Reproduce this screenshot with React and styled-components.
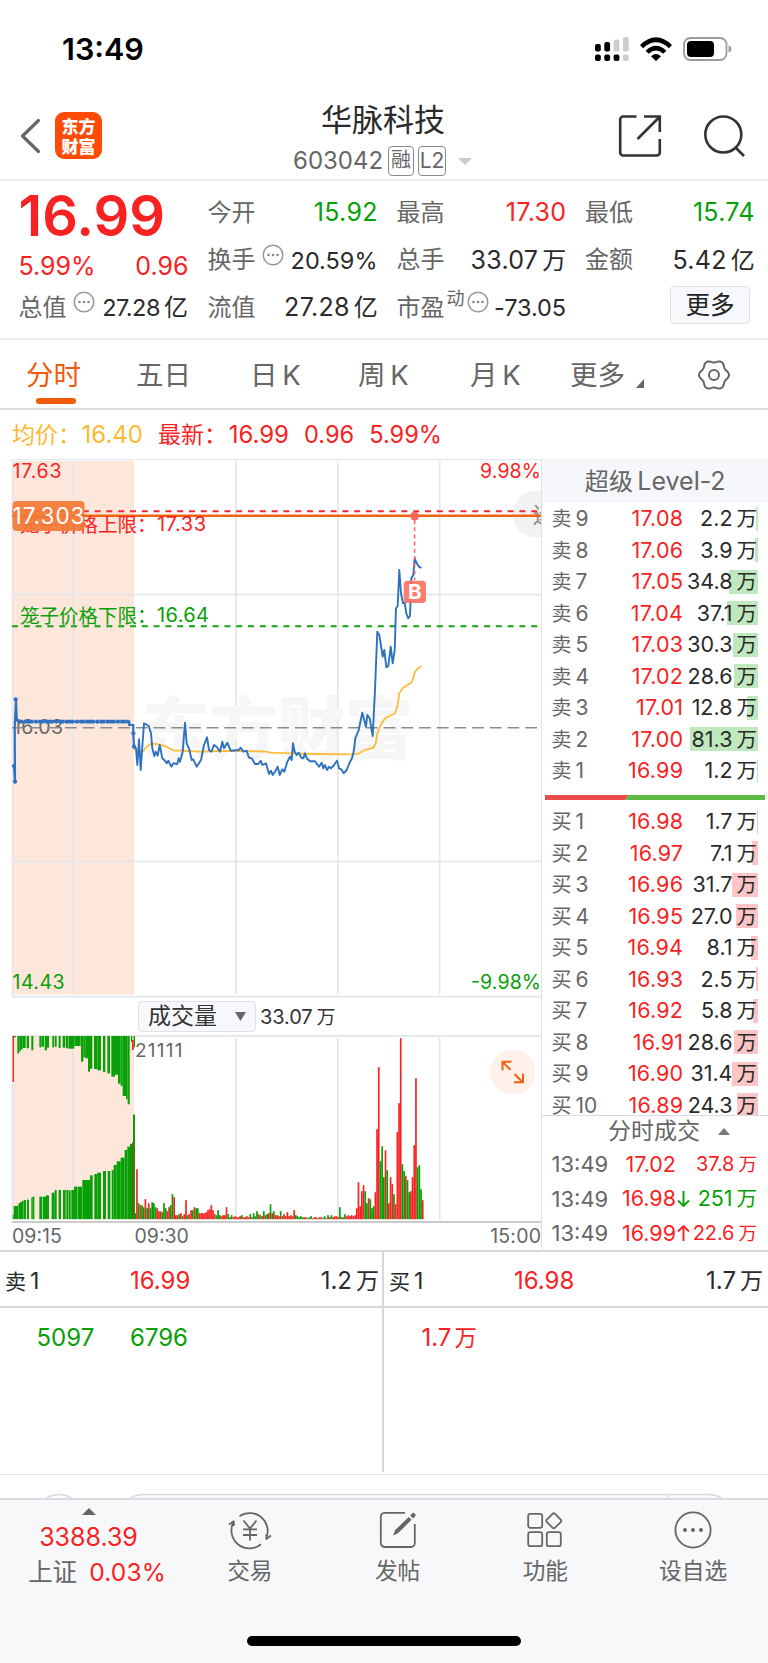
import React from "react";
import styled, { createGlobalStyle } from "styled-components";

const RED = "#f82222";
const GREEN = "#07a007";
const INK = "#2a2a2a";
const GRAY = "#666";
const FONT = 'Inter, "Noto Sans CJK SC", sans-serif';

const Global = createGlobalStyle`
  * { box-sizing: border-box; }
  body { margin: 0; background: #fff; font-family: ${FONT}; color: ${INK}; }
  svg { display: block; }
  svg text { font-family: ${FONT}; }
`;

const Screen = styled.div`
  width: 768px;
  height: 1663px;
  overflow: hidden;
  display: flex;
  flex-direction: column;
  background: #fff;
`;

const Text = styled.span`
  font-size: ${(p) => p.$size || 24}px;
  font-weight: ${(p) => p.$weight || 400};
  color: ${(p) => p.$color || INK};
  letter-spacing: ${(p) => p.$ls || 0}px;
  margin-right: ${(p) => -(p.$ls || 0)}px;
  line-height: 1;
  white-space: nowrap;
`;

const Unit = styled.span`
  margin-left: ${(p) => p.$gap ?? 4}px;
  font-size: ${(p) => p.$size || 24}px;
  letter-spacing: 0;
`;

/* ---------- status bar ---------- */
const StatusBar = styled.div`
  height: 98px;
  display: flex;
  justify-content: space-between;
  align-items: center;
  padding: 0 36px 0 62px;
`;
const StatusIcons = styled.div`
  display: flex;
  align-items: center;
  gap: 11px;
`;

/* ---------- title bar ---------- */
const TitleBar = styled.header`
  height: 83px;
  display: grid;
  grid-template-columns: 289px 190px 289px;
  border-bottom: 2px solid #ededed;
`;
const TitleLeft = styled.div`
  display: flex;
  align-items: center;
  gap: 13px;
  padding: 0 0 6px 20px;
`;
const AppLogo = styled.div`
  width: 47px;
  height: 47px;
  border-radius: 9px;
  background: #ff4b05;
  color: #fff;
  font: 900 17px/20px "Noto Sans CJK SC", sans-serif;
  display: flex;
  flex-direction: column;
  align-items: center;
  justify-content: center;
`;
const TitleCenter = styled.div`
  display: flex;
  flex-direction: column;
  align-items: center;
  padding: 6px 2px 0 0;
`;
const CodeLine = styled.div`
  display: flex;
  align-items: center;
  width: 180px;
  gap: 4px;
  margin-top: 11px;
`;
const Tag = styled.span`
  width: ${(p) => p.$w}px;
  height: 30px;
  flex: none;
  border: 1.5px solid #8a8a8a;
  border-radius: 4px;
  font-size: ${(p) => p.$size}px;
  line-height: 27px;
  text-align: center;
  color: ${GRAY};
`;
const Code = styled(Text)`
  width: 91px;
`;
const Caret = styled.span`
  border: 7px solid transparent;
  border-top-color: #ccc;
  border-bottom: 0;
  margin-left: 8px;
`;
const TitleRight = styled.div`
  display: flex;
  justify-content: flex-end;
  align-items: flex-start;
  gap: 41px;
  padding: 16px 22px 0 0;
`;

/* ---------- quote ---------- */
const Quote = styled.section`
  height: 159px;
  display: grid;
  grid-template-columns: 170px 170px 169.5px 169.5px;
  column-gap: 19px;
  padding: 8px 0 0 18.5px;
  border-bottom: 2px solid #ededed;
`;
const QuoteColumn = styled.div`
  display: flex;
  flex-direction: column;
`;
const QuoteRow = styled.div`
  height: 47.5px;
  display: flex;
  align-items: center;
  justify-content: space-between;
`;
const PriceRow = styled.div`
  height: 53px;
  display: flex;
  align-items: center;
`;
const ChangeRow = styled.div`
  height: 42px;
  display: flex;
  align-items: center;
  justify-content: space-between;
  padding-top: 7px;
`;
const LabelGroup = styled.span`
  display: flex;
  align-items: center;
  gap: 6px;
  svg { margin-bottom: 11px; }
`;
const Sup = styled.span`
  font-size: 18px;
  line-height: 1;
  color: ${GRAY};
  margin: 0 -4px 17px -4px;
`;
const MoreButton = styled.button`
  width: 80px;
  height: 38px;
  margin: -5px 4.5px 0 auto;
  padding: 0;
  border: 1.5px solid #dfe1e8;
  border-radius: 4px;
  background: #f7f8fb;
  font: 400 24.5px/33px ${FONT};
  color: #222;
`;

/* ---------- period tabs ---------- */
const Tabs = styled.nav`
  height: 70px;
  display: flex;
  align-items: center;
  padding: 2px 0 0 26px;
  border-bottom: 2px solid #dcdcdf;
`;
const Tab = styled.div`
  position: relative;
  width: ${(p) => p.$w}px;
  font-size: 27.5px;
  line-height: 66px;
  color: ${(p) => (p.$on ? "#f05a0a" : GRAY)};
  word-spacing: -3px;
  &::after {
    content: "";
    display: ${(p) => (p.$on ? "block" : "none")};
    position: absolute;
    left: 9.5px;
    bottom: 4px;
    width: 40px;
    height: 6px;
    border-radius: 3px;
    background: #f05a0a;
  }
`;
const MoreTab = styled(Tab)`
  display: flex;
  align-items: center;
  gap: 11px;
  svg { margin-top: 17px; }
`;
const Summary = styled.div`
  height: 49px;
  display: flex;
  align-items: center;
  gap: 15px;
  padding: 1px 0 0 12px;
`;
const Pair = styled.span`
  display: flex;
  align-items: center;
  width: ${(p) => p.$w}px;
  justify-content: space-between;
`;

/* ---------- chart + order book ---------- */
const Market = styled.main`
  height: 793px;
  display: grid;
  grid-template-columns: 541px 227px;
  border-bottom: 2px solid #d5d9df;
`;
const ChartArea = styled.div`
  display: flex;
  flex-direction: column;
`;
const VolumeHeader = styled.div`
  height: 37px;
  display: flex;
  align-items: center;
  gap: 4px;
  padding-left: 138px;
`;
const VolumeSelect = styled.div`
  width: 118px;
  height: 31px;
  display: flex;
  align-items: center;
  justify-content: space-between;
  padding: 0 9px 0 9px;
  border: 1.5px solid #dfe1e8;
  border-radius: 4px;
  background: #f7f8fb;
`;
const Axis = styled.div`
  height: 27px;
  display: grid;
  grid-template-columns: 122.5px 1fr auto;
  align-items: center;
  padding: 1px 0 0 12px;
`;

const Book = styled.aside`
  display: flex;
  flex-direction: column;
  border-left: 1.5px solid #dfe1e7;
`;
const BookTitle = styled.div`
  height: 44px;
  flex: none;
  display: flex;
  align-items: center;
  justify-content: center;
  padding-top: 1px;
  background: #f6f7fa;
`;
const BookSide = styled.div`
  height: ${(p) => p.$h}px;
  overflow: hidden;
  flex: none;
`;
const BookRow = styled.div`
  height: 31.5px;
  display: grid;
  grid-template-columns: 60px 71.5px 1fr;
  align-items: center;
  padding: 0 10px 0 9.5px;
`;
const Cell = styled.div`
  display: flex;
  height: 24px;
  align-items: center;
  justify-content: ${(p) => (p.$left ? "flex-start" : "flex-end")};
`;
const QtyCell = styled(Cell)`
  padding-right: 1px;
  background: linear-gradient(${(p) => p.$bar}, ${(p) => p.$bar}) right / ${(p) => p.$w}px 100% no-repeat;
`;
const RatioBar = styled.div`
  padding-left: 2.5px;
  margin: 8px 0 6px;
`;
const TradesTitle = styled.div`
  height: 32px;
  flex: none;
  display: flex;
  align-items: center;
  gap: 18px;
  padding-left: 66px;
  border-top: 1.5px solid #d9dbe0;
`;
const TradeRow = styled.div`
  height: 34.6px;
  display: grid;
  grid-template-columns: 57px 67.5px 15px 1fr;
  align-items: center;
  padding: 0 11px 0 9.5px;
`;

/* ---------- level queues ---------- */
const Queues = styled.section`
  height: 222px;
  display: grid;
  grid-template-columns: 384px 384px;
`;
const Queue = styled.div`
  height: 220px;
  border-right: ${(p) => (p.$divider ? "2px solid #d5d9df" : "0")};
`;
const QueueHead = styled.div`
  height: 56px;
  display: grid;
  grid-template-columns: 125px 1fr auto;
  align-items: center;
  padding: 4px ${(p) => p.$right}px 0 5px;
  border-bottom: 2px solid #d5d9df;
`;
const QueueItems = styled.div`
  height: 60px;
  display: grid;
  grid-template-columns: ${(p) => p.$first}px 92px;
  align-items: center;
  padding-left: ${(p) => 130 - p.$first}px;
`;
const Peek = styled.div`
  height: 24px;
  overflow: hidden;
  border-top: 1.5px solid #e3e5ea;
`;

/* ---------- bottom bar ---------- */
const BottomBar = styled.footer`
  flex: 1;
  display: flex;
  flex-direction: column;
  align-items: center;
  justify-content: space-between;
  padding-bottom: 17px;
  border-top: 2px solid #d9dbe0;
  background: #f7f8fa;
`;
const BottomItems = styled.div`
  width: 768px;
  display: grid;
  grid-template-columns: 176px repeat(4, 147.75px);
`;
const IndexBlock = styled.div`
  display: flex;
  flex-direction: column;
  align-items: center;
  padding: 8px 0 0 1px;
`;
const IndexLine = styled.div`
  display: flex;
  align-items: center;
  gap: 12px;
  margin-top: ${(p) => p.$top}px;
  padding-left: ${(p) => p.$indent || 0}px;
`;
const NavItem = styled.div`
  display: flex;
  flex-direction: column;
  align-items: center;
  gap: 10px;
  padding-top: 10px;
`;
const HomeIndicator = styled.div`
  width: 274px;
  height: 10px;
  border-radius: 5px;
  background: #000;
`;

const InfoDots = () => (
  <svg width="22" height="22" viewBox="0 0 22 22">
    <circle cx="11" cy="11" r="9.8" fill="none" stroke="#999" strokeWidth="1.5" />
    {[6.5, 11, 15.5].map((x) => (
      <circle key={x} cx={x} cy="11" r="1.3" fill="#888" />
    ))}
  </svg>
);

/* Source coordinates are three units per pixel; these helpers bring them to chart pixels. */
const toPoints = (list, dx) =>
  list.map(([x, y]) => `${(x / 3 + dx).toFixed(1)},${(y / 3 - 9).toFixed(1)}`).join(" ");

const PRE_LINE = [[42, 948], [45, 995], [44, 835], [48, 748], [50, 805], [56, 815], [388, 815], [388, 825], [400, 825], [400, 850], [402, 890]];
const PRICE_A = [[402, 890], [408, 895], [412, 945], [417, 868], [422, 960], [427, 890], [432, 820], [446, 828], [453, 850], [457, 895], [463, 918], [467, 905], [473, 917], [479, 885], [487, 925], [495, 932], [500, 940], [505, 932], [514, 950], [520, 940], [532, 942], [536, 925], [540, 935], [548, 905], [555, 818], [560, 880], [567, 895], [575, 930], [580, 928], [590, 950], [603, 930], [612, 885], [621, 862], [627, 900], [634, 905], [642, 885], [650, 890], [660, 905], [667, 875], [672, 895], [682, 878], [692, 902], [716, 900], [722, 893], [730, 905], [740, 902], [746, 922], [755, 925], [765, 942], [775, 942], [782, 932], [787, 945], [798, 940], [807, 972]];
const PRICE_B = [[3, 962], [8, 975], [15, 965], [23, 950], [29, 975], [37, 958], [43, 965], [52, 935], [60, 920], [65, 930], [69, 880], [74, 905], [80, 915], [86, 908], [95, 925], [100, 925], [105, 910], [110, 925], [120, 934], [135, 934], [147, 950], [155, 938], [160, 955], [165, 945], [171, 960], [177, 950], [183, 955], [190, 948], [201, 932], [207, 955], [214, 958], [221, 970], [230, 960], [238, 940], [246, 925], [252, 900], [256, 865], [266, 840], [277, 788], [288, 830], [292, 795], [299, 805], [308, 858], [315, 720], [322, 545], [328, 555], [338, 620], [343, 600], [349, 652], [355, 648], [362, 590], [368, 640], [374, 600], [378, 475], [383, 468], [388, 360], [393, 430], [399, 460], [404, 458], [409, 490], [415, 505], [420, 498], [424, 385], [430, 375], [434, 325], [440, 340], [447, 350], [454, 354]];
const AVG_A = [[402, 895], [412, 905], [428, 905], [440, 890], [455, 880], [480, 884], [500, 890], [520, 901], [560, 903], [600, 905], [650, 903], [740, 903], [800, 905]];
const AVG_B = [[0, 908], [60, 910], [140, 912], [250, 913], [268, 910], [280, 902], [310, 893], [317, 880], [322, 850], [332, 825], [345, 805], [375, 790], [383, 765], [388, 730], [398, 715], [410, 706], [422, 700], [428, 690], [434, 667], [442, 657], [454, 649]];

const GRID_X = [73, 236, 337.8, 439.7];

const PriceChart = () => (
  <svg width="541" height="539" viewBox="0 0 541 539">
    <rect x="12.5" y="2" width="121.5" height="533.7" fill="#fde6da" />
    <g stroke="#e4e7ec" strokeWidth="1.7">
      <path d="M12.5 537V0M12 .5H541M12 135.7H541M12 402.3H541M12 537.7H541" fill="none" />
      {GRID_X.map((x) => (
        <line key={x} x1={x} x2={x} y1="2" y2="535.5" />
      ))}
    </g>
    <text x="142" y="295" fontSize="68" fontWeight="900" fill="#f6f6f6" textLength="271">东方财富</text>
    <text x="13" y="275" fontSize="19.5" fill={GRAY} textLength="50">16.03</text>
    <line x1="65" x2="538" y1="268.8" y2="268.8" stroke="#8b8b8b" strokeWidth="1.6" strokeDasharray="11.8 5.9" />
    <line x1="12" x2="65" y1="268.8" y2="268.8" stroke="#8b8b8b" strokeWidth="1.6" strokeDasharray="11.8 5.9" />
    <line x1="12" x2="538" y1="167.3" y2="167.3" stroke="#12a512" strokeWidth="2" strokeDasharray="6 5.8" />
    <text x="20" y="163.5" fontSize="19.5" fill={GREEN}>笼子价格下限：</text>
    <text x="157" y="163" fontSize="20" fill={GREEN} textLength="52">16.64</text>
    <circle cx="536" cy="55" r="23.3" fill="#f2f2f2" />
    <text x="533" y="63.5" fontSize="22" fill="#888">迷</text>
    <line x1="12" x2="538" y1="52.3" y2="52.3" stroke="#f02a35" strokeWidth="2" strokeDasharray="6 5.8" />
    <line x1="12" x2="541" y1="56.7" y2="56.7" stroke="#f0640f" strokeWidth="2.4" />
    <text x="20" y="73" fontSize="19.5" fill={RED}>笼子价格上限：</text>
    <text x="157" y="72" fontSize="20" fill={RED} textLength="49">17.33</text>
    <polyline points={toPoints(AVG_A, 0) + " " + toPoints(AVG_B, 270)} fill="none" stroke="#fdbc3c" strokeWidth="1.8" strokeLinejoin="round" />
    <polyline points={toPoints(PRE_LINE, 0)} fill="none" stroke="#2d71c0" strokeWidth="2.2" />
    <line x1="18" x2="129" y1="262.6" y2="262.6" stroke="#2d71c0" strokeWidth="3.8" strokeDasharray="5 1 9 1.5 3 1" />
    {[[47, 748], [45, 995], [42, 948], [400, 850], [402, 890]].map(([x, y]) => (
      <circle key={y} cx={x / 3} cy={y / 3 - 9} r="2.1" fill="#2d71c0" />
    ))}
    <polyline points={toPoints(PRICE_A, 0) + " " + toPoints(PRICE_B, 270)} fill="none" stroke="#2d71c0" strokeWidth="1.9" strokeLinejoin="round" />
    <line x1="414.6" x2="414.6" y1="61" y2="121" stroke="#f9625a" strokeWidth="1.5" strokeDasharray="4 3.2" />
    <circle cx="414.6" cy="57.2" r="4.4" fill="#fb6a57" />
    <rect x="403.7" y="121.7" width="22.3" height="22.3" rx="3.5" fill="#ff6e61" fillOpacity=".9" />
    <text x="414.8" y="140.2" fontSize="20.5" fontWeight="700" fill="#fff" textAnchor="middle">B</text>
    <rect x="12.5" y="42" width="72" height="30" rx="4" fill="#f27a36" fillOpacity=".92" />
    <text x="12.5" y="65.2" fontSize="22.5" fill="#fff" textLength="72">17.303</text>
    <text x="12.5" y="19.3" fontSize="19.5" fill={RED} textLength="49">17.63</text>
    <text x="541" y="19.3" fontSize="19.5" fill={RED} textAnchor="end" textLength="61">9.98%</text>
    <text x="12.5" y="530.3" fontSize="19.5" fill={GREEN} textLength="52">14.43</text>
    <text x="541" y="530.3" fontSize="19.5" fill={GREEN} textAnchor="end" textLength="70">-9.98%</text>
  </svg>
);

/* Auction bars hanging from the top: [start, end, lower edge]. */
const AUCTION_TOP = [[38, 48, 232], [52, 58, 280], [58, 63, 273], [63, 68, 268], [68, 77, 264], [80, 87, 265], [94, 100, 271], [118, 125, 262], [126, 132, 260], [134, 141, 271], [141, 147, 263], [157, 162, 262], [164, 170, 260], [176, 182, 264], [188, 196, 263], [198, 205, 265], [206, 223, 266], [223, 242, 258], [243, 250, 305], [250, 256, 292], [256, 264, 295], [264, 270, 335], [270, 277, 326], [282, 292, 327], [292, 303, 331], [309, 316, 336], [322, 330, 340], [334, 345, 350], [345, 354, 344], [354, 362, 371], [362, 368, 378], [368, 378, 408], [378, 383, 418], [383, 389, 433], [393, 397, 245], [401, 405, 262]];
/* Auction bars standing on the base line: [start, end, upper edge]. */
const AUCTION_BASE = [[38, 41, 765], [41, 54, 738], [55, 60, 730], [60, 66, 726], [66, 71, 722], [72, 78, 720], [81, 87, 719], [94, 97, 713], [97, 103, 710], [118, 126, 710], [128, 138, 710], [138, 147, 706], [155, 164, 698], [164, 170, 690], [176, 183, 690], [189, 197, 690], [199, 205, 690], [206, 212, 691], [214, 222, 690], [222, 232, 680], [233, 246, 680], [247, 270, 660], [270, 278, 646], [283, 292, 642], [292, 303, 638], [309, 318, 633], [323, 331, 633], [335, 341, 630], [341, 350, 615], [350, 362, 604], [362, 374, 593], [374, 382, 570], [382, 390, 560], [390, 397, 552]];

/* Minute volumes in pixels of height; negative values are falling minutes. */
const MINUTES = [-6, 50, -16, 14, -14, -12, 20, -11, 16, -11, -17, -16, -12, 11, 8, 8, -7, -16, -11, 8, 12, -14, -25, 22, 4, 4, -5, 6, -3, 5, 19, -4, 5, 9, -9, 12, -11, -11, 6, 6, 6, 6, 7, 9, 10, 14, 9, 5, -4, -9, -4, 3, 4, 4, 12, -5, -2, -4, 2, 3, 2, 2, 3, -4, 2, 2, 3, 2, -5, 2, -6, -3, -8, 5, -4, 3, -8, 4, -5, 6, -15, 6, -8, 4, 4, 3, -8, 3, 5, 3, 7, 3, 4, 3, 9, -4, -3, -2, -3, -2, 2, 2, -1, -2, -3, 1, 2, 2, -1, 2, 2, -1, -3, 1, -4, 2, -4, 2, 3, 3, 2, -12, -2, 2, -5, 3, 4, 3, 4, 3, 4, 11, 37, 13, 28, 34, -28, -16, 21, -20, -11, -13, 27, 90, 152, -58, -73, -42, 69, -49, 16, 42, 35, -25, 15, 87, 116, 181, -55, -48, 43, -39, -27, 28, 42, 74, 141, -52, -54, -30, 19];

const VolumeChart = () => (
  <svg width="541" height="188" viewBox="0 0 541 188">
    <rect x="12.5" y="1" width="121.5" height="183.2" fill="#fde6da" />
    <g stroke="#e1e4ea" strokeWidth="1.7">
      <path d="M12.5 184V.8M12 .8H541" fill="none" />
      {GRID_X.map((x) => (
        <line key={x} x1={x} x2={x} y1="3" y2="184" />
      ))}
    </g>
    <g fill={GREEN}>
      {AUCTION_TOP.map(([a, b, y]) => (
        <rect key={a} x={a / 3} y="1" width={(b - a) / 3} height={(y - 228) / 3} />
      ))}
      {AUCTION_BASE.map(([a, b, y]) => (
        <rect key={a} x={a / 3} y={y / 3 - 75} width={(b - a) / 3} height={(777.5 - y) / 3} />
      ))}
      <rect x="133" y="79.5" width="2" height="104.6" />
      <rect x="12.6" y="1" width="1.4" height="46" fill={RED} />
      <rect x="132" y="5" width="1.7" height="10" fill={RED} />
      <rect x="132" y="107.5" width="1.2" height="76.6" fill="#a04010" />
    </g>
    {MINUTES.map((v, i) => (
      <rect key={i} x={134.4 + i * 1.691} y={184.2 - Math.abs(v)} width="1.7" height={Math.abs(v)} fill={v < 0 ? GREEN : RED} />
    ))}
    <rect x="12" y="186" width="529" height="2" fill="#cbcbce" />
    <text x="135" y="22.3" fontSize="19" fill={GRAY} textLength="47.5">21111</text>
    <circle cx="512.6" cy="37" r="22.5" fill="#fef1ea" />
    <path d="M502.5 35.5V26.8H511.5M503 27.3L510.5 34.8M514 47.2H523V38.5M514.5 39L522.5 47" fill="none" stroke="#f3600f" strokeWidth="2" />
  </svg>
);

const SELLS = [["9", "17.08", "2.2", 2], ["8", "17.06", "3.9", 3], ["7", "17.05", "34.8", 29], ["6", "17.04", "37.1", 31], ["5", "17.03", "30.3", 25], ["4", "17.02", "28.6", 24], ["3", "17.01", "12.8", 11], ["2", "17.00", "81.3", 68], ["1", "16.99", "1.2", 1]];
const BUYS = [["1", "16.98", "1.7", 1], ["2", "16.97", "7.1", 6], ["3", "16.96", "31.7", 26], ["4", "16.95", "27.0", 22], ["5", "16.94", "8.1", 7], ["6", "16.93", "2.5", 2], ["7", "16.92", "5.8", 5], ["8", "16.91", "28.6", 24], ["9", "16.90", "31.4", 26], ["10", "16.89", "24.3", 21]];
const TRADES = [["17.02", "", "37.8", RED], ["16.98", "↓", "251", GREEN], ["16.99", "↑", "22.6", RED]];

const Level = ({ side, row, bar }) => (
  <BookRow>
    <Cell $left>
      <Text $size={20} $color={GRAY}>{side}<Unit $size={21}>{row[0]}</Unit></Text>
    </Cell>
    <Cell><Text $size={21.5} $ls={0.2} $color={RED}>{row[1]}</Text></Cell>
    <QtyCell $bar={bar} $w={row[3]}>
      <Text $size={21.5}>{row[2]}<Unit $size={20.5}>万</Unit></Text>
    </QtyCell>
  </BookRow>
);

const Arrow = ({ up }) => (
  <svg width="15" height="18" viewBox="0 0 15 18" fill="none" stroke={up ? RED : GREEN} strokeWidth="1.9">
    {up ? <path d="M7.5 17V2M2 7.5L7.5 2L13 7.5" /> : <path d="M7.5 1V16M2 10.5L7.5 16L13 10.5" />}
  </svg>
);

const icon = { width: 40, height: 40, viewBox: "0 0 40 40", fill: "none", stroke: "#666", strokeWidth: 1.8, overflow: "visible" };
const NAV = [
  ["交易", (
    <svg {...icon}>
      <path d="M9.5 6.2A18 18 0 0 1 36.5 27.5M31 34.2A18 18 0 0 1 3.8 11.5M-1 14.5L3.8 11.3V16M41 25.5L36.4 29V24.5" strokeLinejoin="round" />
      <path d="M13.5 10.5L20 18.5L26.5 10.5M20 18.5V30.5M13 19.3H27M13 25H27" />
    </svg>
  )],
  ["发帖", (
    <svg {...icon}>
      <path d="M27 2.8H6.5A4 4 0 0 0 2.8 6.8V33.3A4 4 0 0 0 6.5 37H33A4 4 0 0 0 36.8 33.3V14" />
      <path d="M15 25.5L17.2 20L30.8 7L33.6 9.8L20 23.2Z" fill="#666" stroke="none" />
      <path d="M32.2 5.6L35 2.8Q37.8 3.2 37.5 5.8L35 8.4Z" fill="#666" stroke="none" />
    </svg>
  )],
  ["功能", (
    <svg {...icon}>
      <rect x="3.2" y="3.8" width="14" height="14" rx="2" />
      <rect x="3.2" y="22.2" width="14" height="14" rx="2" />
      <rect x="21.8" y="22.2" width="14" height="14" rx="2" />
      <rect x="23" y="5" width="11.6" height="11.6" rx="1.8" transform="rotate(45 28.8 10.8)" />
    </svg>
  )],
  ["设自选", (
    <svg {...icon}>
      <circle cx="20" cy="20" r="17.6" />
      {[12, 20, 28].map((x) => (
        <circle key={x} cx={x} cy="20" r="2" fill="#666" stroke="none" />
      ))}
    </svg>
  )],
];

const gearPath = () => {
  const pts = [];
  for (let i = 0; i <= 72; i++) {
    const a = (i / 72) * Math.PI * 2;
    const r = 13.7 + 1.3 * Math.cos(6 * a);
    pts.push(`${(17 + r * Math.cos(a)).toFixed(2)},${(17 + r * Math.sin(a)).toFixed(2)}`);
  }
  return `M${pts.join("L")}Z`;
};

const Stat = ({ label, value, unit, color, size = 25, ls = 0.3, info, sup }) => (
  <QuoteRow>
    <LabelGroup>
      <Text $color={GRAY}>{label}</Text>
      {sup && <Sup>{sup}</Sup>}
      {info && <InfoDots />}
    </LabelGroup>
    <Text $size={size} $color={color} $ls={ls}>
      {value}
      {unit && <Unit>{unit}</Unit>}
    </Text>
  </QuoteRow>
);

export default function App() {
  return (
    <Screen>
      <Global />
      <StatusBar>
        <Text $size={30.5} $weight={600} $color="#000">13:49</Text>
        <StatusIcons>
          <svg width="34" height="26" viewBox="0 0 34 26">
            {[0, 1, 2, 3].map((i) => (
              <React.Fragment key={i}>
                <rect x={i * 9.3} y={[8, 6, 3.5, 1][i]} width="5.8" height={[7.5, 9.5, 12, 14.5][i]} rx="2" fill={i < 2 ? "#000" : "#ccc"} />
                <rect x={i * 9.3} y="18.5" width="5.8" height="6.5" rx="2" fill={i < 3 ? "#000" : "#ccc"} />
              </React.Fragment>
            ))}
          </svg>
          <svg width="32" height="24" viewBox="0 0 32 24">
            <path d="M0 8Q16-7.5 32 8L28.9 11.2Q16-.5 3.1 11.2Z" />
            <path d="M5.6 13.7Q16 4 26.4 13.7L23.2 16.8Q16 10.4 8.8 16.8Z" />
            <path d="M11 19.2Q16 14.8 21 19.2L16 24Z" />
          </svg>
          <svg width="49" height="24" viewBox="0 0 49 24">
            <rect x="1" y="1" width="42.5" height="22" rx="6.5" fill="none" stroke="#9b9b9b" strokeWidth="1.8" />
            <rect x="4" y="4" width="27" height="16" rx="4" />
            <path d="M45.5 8.5Q48.5 9.5 48.5 12T45.5 15.5Z" fill="#9b9b9b" />
          </svg>
        </StatusIcons>
      </StatusBar>

      <TitleBar>
        <TitleLeft>
          <svg width="22" height="36" viewBox="0 0 22 36">
            <path d="M18.5 2.5L2.5 18L18.5 33.5" fill="none" stroke="#666" strokeWidth="3.2" strokeLinecap="round" strokeLinejoin="round" />
          </svg>
          <AppLogo><span>东方</span><span>财富</span></AppLogo>
        </TitleLeft>
        <TitleCenter>
          <Text $size={31}>华脉科技</Text>
          <CodeLine>
            <Code $color={GRAY}>603042</Code>
            <Tag $w={26} $size={20}>融</Tag>
            <Tag $w={28} $size={21}>L2</Tag>
            <Caret />
          </CodeLine>
        </TitleCenter>
        <TitleRight>
          <svg width="44" height="44" viewBox="0 0 44 44" fill="none" stroke="#333" strokeWidth="2.6">
            <path d="M18.5 2.5H5.2A3 3 0 0 0 2.2 5.5V38.5A3 3 0 0 0 5.2 41.5H38.8A3 3 0 0 0 41.8 38.5V25" />
            <path d="M26 2.5H41.8V18M41.5 3L19.5 25" />
          </svg>
          <svg width="43" height="44" viewBox="0 0 43 44" fill="none" stroke="#333" strokeWidth="2.6">
            <circle cx="20.3" cy="20.5" r="18" />
            <path d="M32.5 33.5L41 42" />
          </svg>
        </TitleRight>
      </TitleBar>

      <Quote>
        <QuoteColumn>
          <PriceRow><Text $size={56} $weight={600} $color={RED}>16.99</Text></PriceRow>
          <ChangeRow>
            <Text $size={25} $color={RED}>5.99%</Text>
            <Text $size={25} $color={RED}>0.96</Text>
          </ChangeRow>
          <Stat label="总值" value="27.28" unit="亿" info size={23.5} ls={-0.5} />
        </QuoteColumn>
        <QuoteColumn>
          <Stat label="今开" value="15.92" color={GREEN} />
          <Stat label="换手" value="20.59%" info size={23.5} ls={0} />
          <Stat label="流值" value="27.28" unit="亿" />
        </QuoteColumn>
        <QuoteColumn>
          <Stat label="最高" value="17.30" color={RED} />
          <Stat label="总手" value="33.07" unit="万" />
          <Stat label="市盈" value="-73.05" info sup="动" size={23.5} ls={-0.1} />
        </QuoteColumn>
        <QuoteColumn>
          <Stat label="最低" value="15.74" color={GREEN} />
          <Stat label="金额" value="5.42" unit="亿" />
          <QuoteRow><MoreButton>更多</MoreButton></QuoteRow>
        </QuoteColumn>
      </Quote>

      <Tabs>
        <Tab $w={110} $on>分时</Tab>
        <Tab $w={114}>五日</Tab>
        <Tab $w={108}>日 K</Tab>
        <Tab $w={112}>周 K</Tab>
        <Tab $w={100}>月 K</Tab>
        <MoreTab $w={127}>
          更多
          <svg width="8" height="9" viewBox="0 0 8 9"><path d="M8 0V9H0Z" fill="#666" /></svg>
        </MoreTab>
        <svg width="34" height="34" viewBox="0 0 34 34" fill="none" stroke="#666" strokeWidth="2">
          <path d={gearPath()} />
          <circle cx="17" cy="17" r="5" />
        </svg>
      </Tabs>
      <Summary>
        <Pair $w={131}>
          <Text $size={23} $color="#fdb934">均价：</Text>
          <Text $color="#fdb934">16.40</Text>
        </Pair>
        <Pair $w={131}>
          <Text $size={23} $color={RED}>最新：</Text>
          <Text $color={RED}>16.99</Text>
        </Pair>
        <Text $size={23.6} $color={RED}>0.96</Text>
        <Text $size={23.6} $color={RED}>5.99%</Text>
      </Summary>

      <Market>
        <ChartArea>
          <PriceChart />
          <VolumeHeader>
            <VolumeSelect>
              <Text $size={23} $color="#333">成交量</Text>
              <svg width="11" height="9" viewBox="0 0 11 9"><path d="M0 0H11L5.5 9Z" fill="#666" /></svg>
            </VolumeSelect>
            <Text $size={20} $color="#333" $ls={-0.1}>33.07<Unit $size={19}>万</Unit></Text>
          </VolumeHeader>
          <VolumeChart />
          <Axis>
            <Text $size={19.5} $color={GRAY}>09:15</Text>
            <Text $size={19.5} $color={GRAY}>09:30</Text>
            <Text $size={19.5} $color={GRAY} $ls={0.2}>15:00</Text>
          </Axis>
        </ChartArea>
        <Book>
          <BookTitle>
            <Text $size={24} $color={GRAY} $ls={0.3}>超级<Unit $size={25}>Level-2</Unit></Text>
          </BookTitle>
          <BookSide $h={284}>
            {SELLS.map((r) => <Level key={r[0]} side="卖" row={r} bar="#bfe8bf" />)}
          </BookSide>
          <RatioBar>
            <svg width="220" height="5" viewBox="0 0 220 5">
              <path d="M0 0H84L80 5H0Z" fill="#ea4b4b" />
              <path d="M84 0H220V5H80Z" fill="#5cbb45" />
            </svg>
          </RatioBar>
          <BookSide $h={309}>
            {BUYS.map((r) => <Level key={r[0]} side="买" row={r} bar="#fdc5c5" />)}
          </BookSide>
          <TradesTitle>
            <Text $size={23} $color={GRAY}>分时成交</Text>
            <svg width="12" height="7" viewBox="0 0 12 7"><path d="M0 7H12L6 0Z" fill="#777" /></svg>
          </TradesTitle>
          {TRADES.map((t) => (
            <TradeRow key={t[0]}>
              <Text $size={22} $color={GRAY}>13:49</Text>
              <Cell><Text $size={21.5} $color={RED}>{t[0]}</Text></Cell>
              <Cell>{t[1] && <Arrow up={t[1] === "↑"} />}</Cell>
              <Cell>
                <Text $size={t[2] === "251" ? 21.5 : 20} $ls={-0.1} $color={t[3]}>
                  {t[2]}
                  <Unit $size={t[2] === "251" ? 20.5 : 18.5}>万</Unit>
                </Text>
              </Cell>
            </TradeRow>
          ))}
        </Book>
      </Market>

      <Queues>
        <Queue $divider>
          <QueueHead $right={3}>
            <Text $size={21}>卖<Unit $size={23}>1</Unit></Text>
            <Text $color={RED}>16.99</Text>
            <Text>1.2<Unit $size={23}>万</Unit></Text>
          </QueueHead>
          <QueueItems $first={93.5}>
            <Text $color={GREEN}>5097</Text>
            <Text $color={GREEN}>6796</Text>
          </QueueItems>
        </Queue>
        <Queue>
          <QueueHead $right={5}>
            <Text $size={21}>买<Unit $size={23}>1</Unit></Text>
            <Text $color={RED}>16.98</Text>
            <Text>1.7<Unit $size={23}>万</Unit></Text>
          </QueueHead>
          <QueueItems $first={92.5}>
            <Text $color={RED}>1.7<Unit $size={22.5} $gap={3}>万</Unit></Text>
          </QueueItems>
        </Queue>
      </Queues>

      <Peek>
        <svg width="768" height="60" viewBox="0 0 768 60" fill="none" stroke="#d6d9df" strokeWidth="1.4">
          <circle cx="59" cy="42.5" r="23" />
          <rect x="120" y="19.5" width="612" height="46" rx="23" fill="#fafbfc" />
          <path d="M668 20V60" />
        </svg>
      </Peek>

      <BottomBar>
        <BottomItems>
          <IndexBlock>
            <svg width="14" height="7" viewBox="0 0 14 7"><path d="M0 7H14L7 0Z" fill="#666" /></svg>
            <IndexLine $top={10}><Text $size={25} $color={RED}>3388.39</Text></IndexLine>
            <IndexLine $top={10} $indent={17}>
              <Text $size={24.5} $color={GRAY}>上证</Text>
              <Text $size={24.5} $ls={0.2} $color={RED}>0.03%</Text>
            </IndexLine>
          </IndexBlock>
          {NAV.map(([label, svg]) => (
            <NavItem key={label}>
              {svg}
              <Text $size={22.7} $color={GRAY}>{label}</Text>
            </NavItem>
          ))}
        </BottomItems>
        <HomeIndicator />
      </BottomBar>
    </Screen>
  );
}
